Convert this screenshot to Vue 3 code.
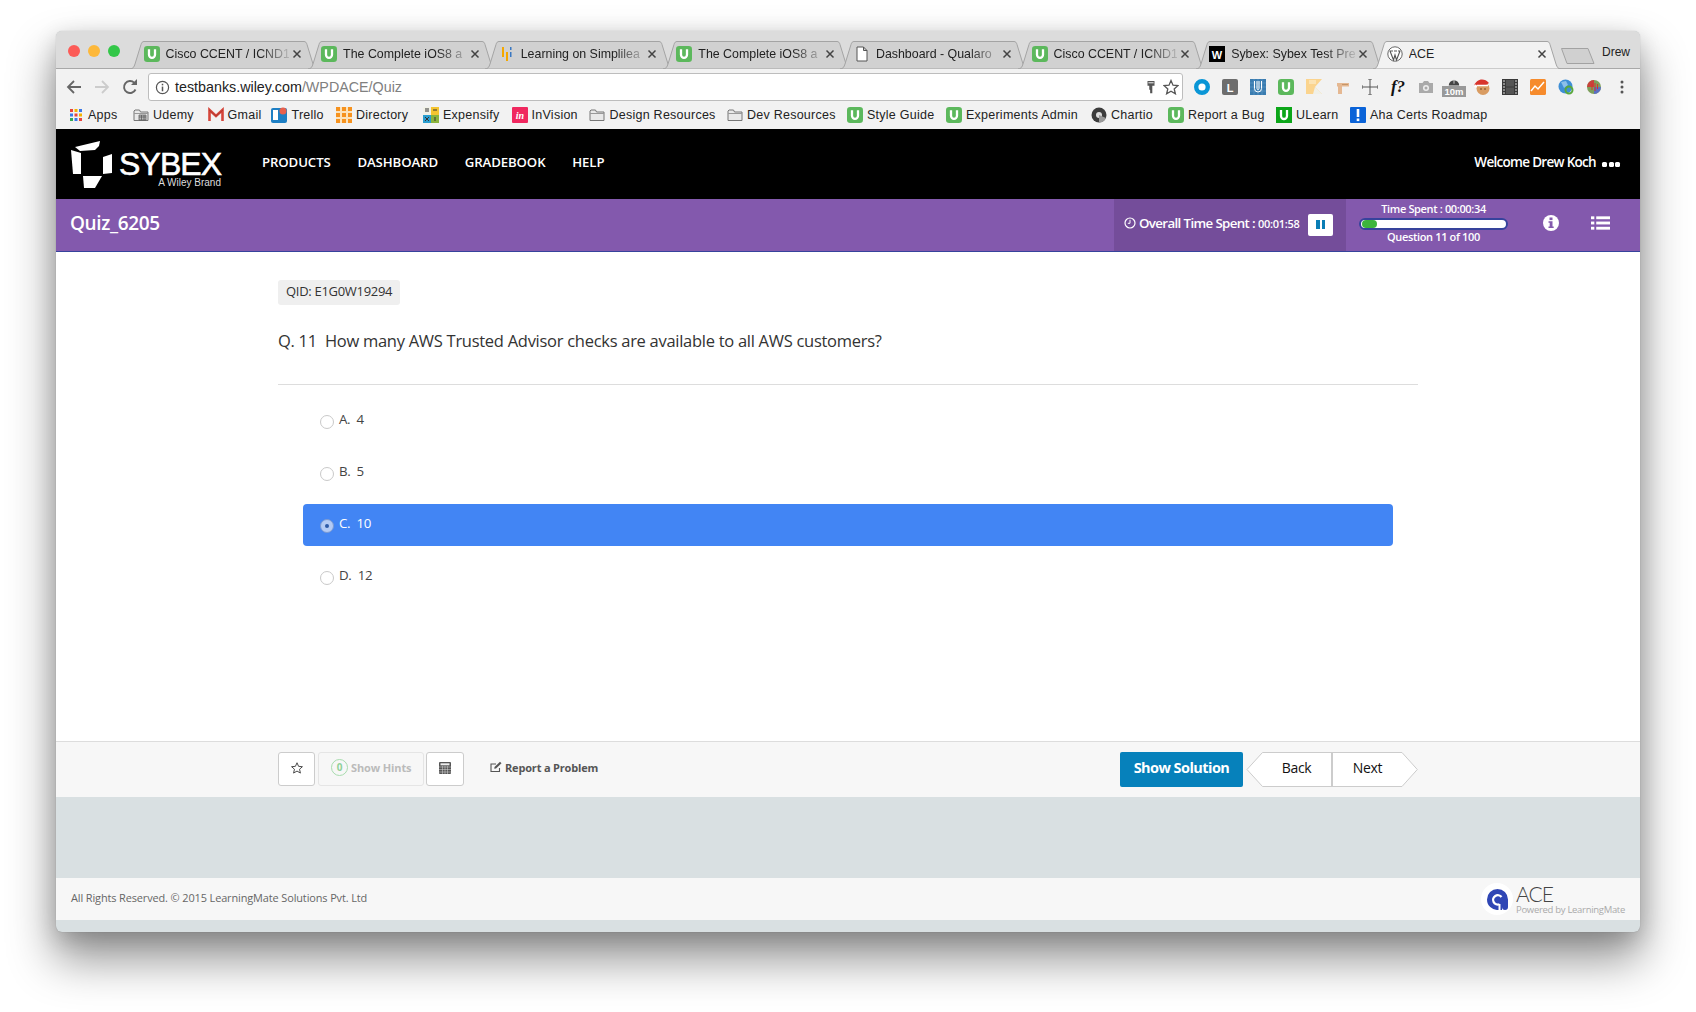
<script setup>
const tabs = [
  { icon: 'u', title: 'Cisco CCENT / ICND1' },
  { icon: 'u', title: 'The Complete iOS8 a' },
  { icon: 'bars', title: 'Learning on Simplilea' },
  { icon: 'u', title: 'The Complete iOS8 a' },
  { icon: 'doc', title: 'Dashboard - Qualaro' },
  { icon: 'u', title: 'Cisco CCENT / ICND1' },
  { icon: 'w', title: 'Sybex: Sybex Test Pre' },
  { icon: 'wp', title: 'ACE', active: true }
]
const bookmarks = [
  { icon: 'apps', label: 'Apps', w: 65 },
  { icon: 'fold2', label: 'Udemy', w: 74.6 },
  { icon: 'gmail', label: 'Gmail', w: 63.9 },
  { icon: 'trello', label: 'Trello', w: 64.5 },
  { icon: 'dir', label: 'Directory', w: 87 },
  { icon: 'exp', label: 'Expensify', w: 88.6 },
  { icon: 'inv', label: 'InVision', w: 77.9 },
  { icon: 'folder', label: 'Design Resources', w: 137.5 },
  { icon: 'folder', label: 'Dev Resources', w: 120 },
  { icon: 'u', label: 'Style Guide', w: 99 },
  { icon: 'u', label: 'Experiments Admin', w: 145 },
  { icon: 'chartio', label: 'Chartio', w: 77 },
  { icon: 'u', label: 'Report a Bug', w: 108 },
  { icon: 'ulearn', label: 'ULearn', w: 74 },
  { icon: 'aha', label: 'Aha Certs Roadmap', w: 140 }
]
const options = [
  { key: 'A.', text: '4' },
  { key: 'B.', text: '5' },
  { key: 'C.', text: '10', selected: true },
  { key: 'D.', text: '12' }
]
const nav = ['PRODUCTS', 'DASHBOARD', 'GRADEBOOK', 'HELP']
</script>

<template>
  <div class="page">
    <svg class="defs" width="0" height="0" aria-hidden="true">
      <symbol id="u" viewBox="0 0 16 16">
        <rect width="16" height="16" rx="3.2" fill="#5cb85c" />
        <path d="M5 3.2v5.6a3 3 0 0 0 6 0V3.2" fill="none" stroke="#fff" stroke-width="2.3" />
      </symbol>
      <symbol id="folder" viewBox="0 0 16 16">
        <path d="M1 4V13.5H15V5H7.5L6.5 3H2Z" fill="#e9e9e9" stroke="#777" />
        <path d="M1 6.5H15" stroke="#999" />
      </symbol>
    </svg>

    <div class="window">
      <!-- tab strip -->
      <div class="strip">
        <div class="lights">
          <span class="light red"></span>
          <span class="light yellow"></span>
          <span class="light green"></span>
        </div>
        <div class="tabs">
          <div v-for="(t, i) in tabs" :key="i" class="tab" :class="{ active: t.active }">
            <svg class="tab-shape" viewBox="0 0 188 28" preserveAspectRatio="none">
              <path d="M0 28C3 28 4 26 5 23L11 3.500C11.500 1.500 12.500 .5 14 .5H174C175.500 .5 176.500 1.500 177 3.500L183 23C184 26 185 28 188 28Z" />
            </svg>
            <svg v-if="t.icon === 'u'" class="fav" viewBox="0 0 16 16"><use href="#u" /></svg>
            <svg v-else-if="t.icon === 'bars'" class="fav" viewBox="0 0 16 16">
              <rect x="3" y="1" width="2" height="10" fill="#f5a800" />
              <rect x="7" y="6" width="2" height="9" fill="#f5a800" />
              <rect x="11" y="1" width="1.500" height="3" fill="#3a78c2" />
              <rect x="11" y="6" width="1.500" height="5" fill="#3a78c2" />
            </svg>
            <svg v-else-if="t.icon === 'doc'" class="fav" viewBox="0 0 16 16">
              <path d="M3 1H9.500L13 4.500V15H3ZM9.500 1V4.500H13" fill="#fff" stroke="#555" />
            </svg>
            <svg v-else-if="t.icon === 'w'" class="fav" viewBox="0 0 16 16">
              <rect width="16" height="16" fill="#000" />
              <text x="8" y="12.500" text-anchor="middle" class="wtext">W</text>
            </svg>
            <svg v-else class="fav" viewBox="0 0 16 16">
              <circle cx="8" cy="8" r="7.200" fill="#fff" stroke="#666" />
              <path d="M3 5L6.500 14L8 9L9.500 14L13 5M2.500 5H6M7 5H10M11 5H13.500" fill="none" stroke="#555" stroke-width="1.100" />
            </svg>
            <span class="tab-title">{{ t.title }}</span>
            <svg class="tab-close" viewBox="0 0 10 10">
              <path d="M1.500 1.500L8.500 8.500M8.500 1.500L1.500 8.500" stroke="#444" stroke-width="1.500" />
            </svg>
          </div>
        </div>
        <svg class="newtab" viewBox="0 0 34 16"><path d="M.5 .5H27L33 15.500H6Z" fill="#d0d0d0" stroke="#a2a2a2" /></svg>
        <span class="drew">Drew</span>
      </div>

      <!-- toolbar -->
      <div class="toolbar">
        <button class="tbtn">
          <svg viewBox="0 0 16 16"><path d="M15 8H2M8 2L2 8L8 14" fill="none" stroke="#666" stroke-width="1.800" /></svg>
        </button>
        <button class="tbtn">
          <svg viewBox="0 0 16 16"><path d="M1 8H14M8 2L14 8L8 14" fill="none" stroke="#ccc" stroke-width="1.800" /></svg>
        </button>
        <button class="tbtn">
          <svg viewBox="0 0 16 16"><path d="M13.500 10.500A6 6 0 1 1 12.300 3.800" fill="none" stroke="#666" stroke-width="1.900" /><path d="M9 6H15V0Z" fill="#666" /></svg>
        </button>
        <div class="url">
          <svg class="url-info" viewBox="0 0 16 16">
            <circle cx="8" cy="8" r="6.500" fill="none" stroke="#555" stroke-width="1.300" />
            <rect x="7.200" y="7" width="1.600" height="5" fill="#555" />
            <rect x="7.200" y="4" width="1.600" height="1.700" fill="#555" />
          </svg>
          <span class="url-host">testbanks.wiley.com</span><span class="url-path">/WPDACE/Quiz</span>
          <svg class="url-key" viewBox="0 0 16 16">
            <path d="M4 1H12V6.500H9.500V15H7V11H6V6.500H4Z" fill="#555" />
            <rect x="5" y="2.500" width="6" height="1.300" fill="#ddd" />
          </svg>
          <svg class="url-star" viewBox="0 0 16 16">
            <path d="M8 1.500L10 6.200L15 6.600L11.200 9.900L12.400 14.800L8 12.200L3.600 14.800L4.800 9.900L1 6.600L6 6.200Z" fill="none" stroke="#555" stroke-width="1.300" />
          </svg>
        </div>
        <div class="ext">
          <div class="ext-slot"><svg viewBox="0 0 16 16"><circle cx="8" cy="8" r="5.800" fill="#fff" stroke="#0a96d6" stroke-width="4.400" /></svg></div>
          <div class="ext-slot"><svg viewBox="0 0 16 16"><rect width="16" height="16" rx="2" fill="#6d6d6d" /><text x="8" y="12.500" text-anchor="middle" class="ltext">L</text></svg></div>
          <div class="ext-slot">
            <svg viewBox="0 0 16 16">
              <rect width="16" height="16" fill="#3a7cb0" />
              <path d="M0 4H16M0 8H16M0 12H16M4 0V16M8 0V16M12 0V16" stroke="#6fa3cc" stroke-width=".5" />
              <path d="M4.500 2V9.500a3.500 3.500 0 0 0 7 0V2M7 2V9.500a1 1 0 0 0 2 0V2" fill="none" stroke="#fff" />
            </svg>
          </div>
          <div class="ext-slot"><svg viewBox="0 0 16 16"><use href="#u" /></svg></div>
          <div class="ext-slot">
            <svg viewBox="0 0 16 16">
              <path d="M0 0H16L9 8L16 15H0Z" fill="#fbd48e" />
              <path d="M3 1H10V5H3Z" fill="#fce3b3" />
              <path d="M9 8L16 15H7Z" fill="#f0f0e8" />
            </svg>
          </div>
          <div class="ext-slot">
            <svg viewBox="0 0 16 16">
              <path d="M3 4H15V7.500H8V15H4V7.500H3Z" fill="#e5b892" />
              <path d="M8 5.500H14" stroke="#c69669" />
            </svg>
          </div>
          <div class="ext-slot">
            <svg viewBox="0 0 16 16">
              <path d="M0 8H16M8 0V16M0 6V10M16 6V10M6 0H10M6 16H10" stroke="#555" fill="none" />
            </svg>
          </div>
          <div class="ext-slot"><span class="ffn">f?</span></div>
          <div class="ext-slot">
            <svg viewBox="0 0 16 16">
              <path d="M1 4H4.500L6 2H10L11.500 4H15V14H1Z" fill="#aaa" />
              <circle cx="8" cy="9" r="3" fill="#eee" /><circle cx="8" cy="9" r="1.500" fill="#aaa" />
            </svg>
          </div>
          <div class="ext-slot">
            <div class="tenm">
              <svg viewBox="0 0 16 9"><path d="M2 9A6 6 0 0 1 14 9Z" fill="#444" /><path d="M8 2V7" stroke="#ddd" /></svg>
              <span>10m</span>
            </div>
          </div>
          <div class="ext-slot">
            <svg viewBox="0 0 16 16">
              <circle cx="9" cy="9.500" r="6.500" fill="#d99c62" />
              <path d="M0 7C2 0 10 -2 15 4L12 6Z" fill="#d8342c" />
              <circle cx="1.500" cy="7" r="1.500" fill="#fff" />
              <path d="M3 6.500H14" stroke="#fff" stroke-width="1.700" />
              <circle cx="7" cy="10" r=".8" fill="#6b3b1a" /><circle cx="11" cy="10" r=".8" fill="#6b3b1a" />
            </svg>
          </div>
          <div class="ext-slot">
            <svg viewBox="0 0 16 16">
              <rect width="16" height="16" fill="#3a3a3a" />
              <path d="M1 2H3M1 5H3M1 8H3M1 11H3M1 14H3M13 2H15M13 5H15M13 8H15M13 11H15M13 14H15" stroke="#ddd" />
              <rect x="4" y="1" width="8" height="6.500" fill="#555" /><rect x="4" y="8.500" width="8" height="6.500" fill="#555" />
            </svg>
          </div>
          <div class="ext-slot">
            <svg viewBox="0 0 16 16">
              <rect width="16" height="16" rx="1.500" fill="#f68b2c" />
              <path d="M1 12L5 7L8 10L14 3" fill="none" stroke="#fff" stroke-width="1.500" />
            </svg>
          </div>
          <div class="ext-slot">
            <svg viewBox="0 0 16 16">
              <circle cx="7.500" cy="7.500" r="7" fill="#3f8fd6" />
              <path d="M3 3L8 2L10 6L6 9Z" fill="#8cc0ea" />
              <circle cx="11" cy="11" r="3.500" fill="none" stroke="#5aa83c" stroke-width="2" />
            </svg>
          </div>
          <div class="ext-slot">
            <svg viewBox="0 0 16 16">
              <circle cx="8" cy="8" r="7" fill="#7d9f5c" />
              <path d="M8 1A7 7 0 0 0 1 8H8Z" fill="#c9413b" />
              <path d="M8 8H15A7 7 0 0 1 8 15Z" fill="#5a6fc4" />
              <path d="M6 5V11M9 4V12M11.500 5V10" stroke="#d8342c" />
            </svg>
          </div>
          <div class="ext-slot">
            <svg viewBox="0 0 16 16"><circle cx="8" cy="3" r="1.500" fill="#555" /><circle cx="8" cy="8" r="1.500" fill="#555" /><circle cx="8" cy="13" r="1.500" fill="#555" /></svg>
          </div>
        </div>
      </div>

      <!-- bookmarks -->
      <div class="bookmarks">
        <div v-for="b in bookmarks" :key="b.label" class="bm" :style="{ width: b.w + 'px' }">
          <svg v-if="b.icon === 'u'" class="bm-ico" viewBox="0 0 16 16"><use href="#u" /></svg>
          <svg v-else-if="b.icon === 'folder'" class="bm-ico" viewBox="0 0 16 16"><use href="#folder" /></svg>
          <svg v-else-if="b.icon === 'fold2'" class="bm-ico" viewBox="0 0 16 16">
            <use href="#folder" />
            <path d="M6 8H13V13H6ZM6 10H13M8.500 8V13M11 8V13" fill="#bbb" stroke="#555" stroke-width=".7" />
          </svg>
          <svg v-else-if="b.icon === 'apps'" class="bm-ico" viewBox="0 0 16 16">
            <rect x="2" y="2" width="3" height="3" fill="#e8453c" /><rect x="6.500" y="2" width="3" height="3" fill="#f4b400" /><rect x="11" y="2" width="3" height="3" fill="#3b78e7" />
            <rect x="2" y="6.500" width="3" height="3" fill="#3b78e7" /><rect x="6.500" y="6.500" width="3" height="3" fill="#e8453c" /><rect x="11" y="6.500" width="3" height="3" fill="#f4b400" />
            <rect x="2" y="11" width="3" height="3" fill="#34a853" /><rect x="6.500" y="11" width="3" height="3" fill="#3b78e7" /><rect x="11" y="11" width="3" height="3" fill="#e8453c" />
          </svg>
          <svg v-else-if="b.icon === 'gmail'" class="bm-ico" viewBox="0 0 16 16">
            <path d="M1.500 14V3L8 9L14.500 3V14" fill="none" stroke="#d5453a" stroke-width="2.600" />
            <path d="M1 3L8 9L15 3" fill="none" stroke="#b23a30" />
          </svg>
          <svg v-else-if="b.icon === 'trello'" class="bm-ico" viewBox="0 0 16 16">
            <rect y="1" width="16" height="15" rx="2" fill="#1d7fc4" />
            <rect x="2" y="3" width="5" height="10" fill="#fff" />
            <circle cx="12" cy="4" r="3.500" fill="#e8604c" />
          </svg>
          <svg v-else-if="b.icon === 'dir'" class="bm-ico" viewBox="0 0 16 16">
            <rect width="16" height="16" fill="#fbe3bd" />
            <path d="M0 0H4V4H0ZM6 0H10V4H6ZM12 0H16V4H12ZM0 6H4V10H0ZM6 6H10V10H6ZM12 6H16V10H12ZM0 12H4V16H0ZM6 12H10V16H6ZM12 12H16V16H12Z" fill="#f6921e" />
          </svg>
          <svg v-else-if="b.icon === 'exp'" class="bm-ico" viewBox="0 0 16 16">
            <rect width="8" height="8" fill="#f2f2e8" /><rect x="8" width="8" height="8" fill="#f4c430" />
            <rect y="8" width="8" height="8" fill="#2a9dcf" /><rect x="8" y="8" width="8" height="8" fill="#8cb43c" />
            <path d="M2 2H6M2 4H6M10 3H14M2 10L6 14M6 10L2 14M12 10V14" stroke="#333" />
          </svg>
          <svg v-else-if="b.icon === 'inv'" class="bm-ico" viewBox="0 0 16 16">
            <rect width="16" height="16" rx="1" fill="#f0285f" />
            <text x="8" y="12" text-anchor="middle" class="invtext">in</text>
          </svg>
          <svg v-else-if="b.icon === 'chartio'" class="bm-ico" viewBox="0 0 16 16">
            <circle cx="8" cy="8" r="7.500" fill="#3c3c3c" />
            <circle cx="8" cy="8" r="3" fill="#ddd" />
            <path d="M8 8L15 11A7.500 7.500 0 0 1 8 15.500Z" fill="#999" />
          </svg>
          <svg v-else-if="b.icon === 'ulearn'" class="bm-ico" viewBox="0 0 16 16">
            <rect width="16" height="16" fill="#0ca619" />
            <path d="M5 3V9a3 3 0 0 0 6 0V3" fill="none" stroke="#fff" stroke-width="2.300" />
          </svg>
          <svg v-else class="bm-ico" viewBox="0 0 16 16">
            <rect width="16" height="16" rx="1" fill="#0a63d8" />
            <rect x="6.700" y="2" width="2.600" height="8" fill="#fff" />
            <rect x="6.700" y="11.500" width="2.600" height="2.600" fill="#fff" />
          </svg>
          <span class="bm-label">{{ b.label }}</span>
        </div>
      </div>

      <!-- site header -->
      <header class="site">
        <div class="logo">
          <svg class="logo-mark" viewBox="0 0 42 47">
            <path d="M4 6L29 0L28 5L24 9L9 10Z" fill="#fff" />
            <path d="M0 9L10 12V33L2 33Z" fill="#fff" />
            <path d="M12 35H31L24 47H13Z" fill="#fff" />
            <path d="M32 16L41 13V32L32 33Z" fill="#fff" />
          </svg>
          <div class="logo-words">
            <span class="logo-name">SYBEX</span>
            <span class="logo-sub">A Wiley Brand</span>
          </div>
        </div>
        <nav class="site-nav">
          <a v-for="n in nav" :key="n">{{ n }}</a>
        </nav>
        <div class="welcome">
          Welcome Drew Koch
          <span class="dots"><i></i><i></i><i></i></span>
        </div>
      </header>

      <!-- purple bar -->
      <div class="quizbar">
        <h1 class="quiz-title">Quiz_6205</h1>
        <div class="overall">
          <svg class="clock" viewBox="0 0 12 12">
            <circle cx="6" cy="6" r="5" fill="none" stroke="#fff" stroke-width="1.200" />
            <path d="M6 2.800V6.300H3.800" fill="none" stroke="#fff" />
          </svg>
          <span class="ov-label">Overall Time Spent :</span>
          <span class="ov-time">00:01:58</span>
          <button class="pause"><i></i><i></i></button>
        </div>
        <div class="spent">
          <span>Time Spent : 00:00:34</span>
          <div class="progress"><div class="progress-fill"></div></div>
          <span>Question 11 of 100</span>
        </div>
        <svg class="info" viewBox="0 0 16 16">
          <circle cx="8" cy="8" r="8" fill="#fff" />
          <rect x="6.500" y="2.500" width="3" height="2.600" fill="#8359ad" />
          <path d="M5.500 6.300H9.500V11.500H10.700V13H5.500V11.500H6.700V7.800H5.500Z" fill="#8359ad" />
        </svg>
        <svg class="listico" viewBox="0 0 20 14">
          <rect width="3.500" height="3" fill="#fff" /><rect x="5.500" width="14.500" height="3" fill="#fff" />
          <rect y="5.500" width="3.500" height="3" fill="#fff" /><rect x="5.500" y="5.500" width="14.500" height="3" fill="#fff" />
          <rect y="11" width="3.500" height="3" fill="#fff" /><rect x="5.500" y="11" width="14.500" height="3" fill="#fff" />
        </svg>
      </div>

      <!-- question -->
      <main class="main">
        <span class="qid">QID: E1G0W19294</span>
        <p class="question">Q. 11&nbsp; How many AWS Trusted Advisor checks are available to all AWS customers?</p>
        <div class="rule"></div>
        <div class="options">
          <label v-for="o in options" :key="o.key" class="option" :class="{ selected: o.selected }">
            <span class="radio"><i v-if="o.selected"></i></span>
            <span class="opt-text">{{ o.key }}&nbsp; {{ o.text }}</span>
          </label>
        </div>
      </main>

      <!-- actions -->
      <div class="actions">
        <button class="box star-box">
          <svg viewBox="0 0 16 16"><path d="M8 2L9.800 6.100L14.200 6.500L10.900 9.400L11.900 13.800L8 11.500L4.100 13.800L5.100 9.400L1.800 6.500L6.200 6.100Z" fill="none" stroke="#444" stroke-width="1.100" /></svg>
        </button>
        <button class="box hints">
          <span class="hint-count">0</span>
          <span>Show Hints</span>
        </button>
        <button class="box calc">
          <svg viewBox="0 0 12 12">
            <rect width="12" height="12" rx="1" fill="#555" />
            <rect x="1.500" y="1.300" width="9" height="2" fill="#eee" />
            <path d="M0 5H12M0 7.500H12M0 10H12M3.500 4V12M6 4V12M8.500 4V12" stroke="#ddd" stroke-width=".5" />
          </svg>
        </button>
        <a class="report">
          <svg viewBox="0 0 12 12">
            <path d="M9.500 7V10.500H1V3H6" fill="none" stroke="#555" stroke-width="1.100" />
            <path d="M4.500 6L10 .8L11.500 2.300L6 7.500L4.300 7.800Z" fill="#555" />
          </svg>
          Report a Problem
        </a>
        <div class="act-right">
          <button class="solution">Show Solution</button>
          <div class="pager">
            <svg class="pager-bg" viewBox="0 0 172 35">
              <path d="M16.500 .5H156L171.300 17.500L156 34.500H16.500L1 17.500Z" fill="#fff" stroke="#ccc" />
              <rect x="85" y="0" width="2" height="35" fill="#ccc" />
            </svg>
            <a class="page-back">Back</a>
            <a class="page-next">Next</a>
          </div>
        </div>
      </div>

      <div class="band"></div>

      <footer class="foot">
        <span class="foot-copy">All Rights Reserved. © 2015 LearningMate Solutions Pvt. Ltd</span>
        <div class="foot-brand">
          <div class="foot-circle">
            <svg viewBox="0 0 21 21">
              <path d="M0 10.500A10.500 10.500 0 0 1 21 10.500V18A3 3 0 0 1 15 18V21H11A10.500 10.500 0 0 1 0 10.500Z" fill="#2f46b5" />
              <path d="M14.500 8A4.700 4.700 0 1 0 12.500 15.300" fill="none" stroke="#fff" stroke-width="2.300" />
              <path d="M12.500 15V21" stroke="#fff" stroke-width="2" />
            </svg>
          </div>
          <div class="foot-words">
            <span class="foot-ace">ACE</span>
            <span class="foot-pow">Powered by LearningMate</span>
          </div>
        </div>
      </footer>
    </div>
  </div>
</template>

<style>
html, body { margin: 0; background: #fff; }
</style>

<style scoped>
.page { width: 1696px; height: 1012px; padding: 31px 0 0 56px; box-sizing: border-box; overflow: hidden; font-family: "Open Sans", "Liberation Sans", sans-serif; }
.defs { position: absolute; }
.window { width: 1584px; height: 901px; display: flex; flex-direction: column; border-radius: 6px; overflow: hidden; background: #d9e0e2; box-shadow: 0 26px 46px 2px rgba(0,0,0,.42), 0 0 1px rgba(0,0,0,.3), 0 6px 22px rgba(0,0,0,.16); }

.strip { height: 37px; flex: none; display: flex; align-items: flex-end; background: #dcdcdc; border-bottom: 1px solid #a8a8a8; position: relative; font-family: "Liberation Sans", sans-serif; }
.lights { align-self: flex-start; margin: 14px 0 0 12px; width: 52px; display: flex; gap: 8px; flex: none; }
.light { width: 12px; height: 12px; border-radius: 50%; }
.red { background: #fc5b57; } .yellow { background: #fdb83a; } .green { background: #33c748; }
.tabs { display: flex; margin-left: 10px; margin-bottom: -1px; flex: none; }
.tab { position: relative; width: 188px; height: 28px; margin-right: -10.400px; padding: 0 0 2px 13.500px; box-sizing: border-box; display: flex; align-items: center; flex: none; }
.tab:last-child { margin-right: 0; }
.tab-shape { position: absolute; left: 0; top: 0; width: 188px; height: 28px; }
.tab-shape path { fill: #d1d1d1; stroke: #a4a4a4; }
.tab.active .tab-shape path { fill: #f2f2f2; }
.fav { width: 16px; height: 16px; flex: none; position: relative; }
.wtext { font: bold 11px "Liberation Sans", sans-serif; fill: #fff; }
.tab-title { position: relative; width: 123.500px; margin-left: 6px; font-size: 12.400px; color: #222; white-space: nowrap; overflow: hidden; -webkit-mask-image: linear-gradient(90deg, #000 76%, rgba(0,0,0,.15) 100%); mask-image: linear-gradient(90deg, #000 76%, rgba(0,0,0,.15) 100%); }
.tab.active .tab-title { -webkit-mask-image: none; mask-image: none; width: 125.500px; }
.tab-close { position: relative; width: 10px; height: 10px; margin-left: 3px; flex: none; }
.newtab { align-self: flex-start; width: 34px; height: 16px; margin: 17px 0 0 0; flex: none; }
.drew { align-self: flex-start; margin: 12.500px 10px 0 auto; font-size: 12px; line-height: 16px; color: #222; }

.toolbar { height: 32px; padding-top: 4px; box-sizing: border-box; flex: none; display: flex; align-items: center; padding-left: 4px; background: #f2f2f2; font-family: "Liberation Sans", sans-serif; }
.tbtn { width: 28px; height: 28px; border: 0; padding: 0; background: none; display: flex; align-items: center; justify-content: center; flex: none; }
.tbtn svg { width: 16px; height: 16px; }
.url { margin-left: 4px; width: 1035px; height: 28px; box-sizing: border-box; flex: none; display: flex; align-items: center; background: #fff; border: 1px solid #bdbdbd; border-radius: 3px; padding-left: 6px; }
.url-info { width: 15px; height: 15px; flex: none; }
.url-host { margin-left: 5px; font-size: 14.300px; color: #222; }
.url-path { font-size: 14.300px; color: #808080; }
.url-key { width: 14px; height: 14px; margin-left: auto; flex: none; }
.url-star { width: 16px; height: 16px; margin: 0 3px 0 5px; flex: none; }
.ext { display: flex; margin-left: 5px; }
.ext-slot { width: 28px; height: 28px; flex: none; display: flex; align-items: center; justify-content: center; }
.ext-slot > svg { width: 16px; height: 16px; }
.ltext { font: bold 11px "Liberation Sans", sans-serif; fill: #fff; }
.ffn { font: italic bold 17px "Liberation Serif", serif; color: #111; }
.tenm { display: flex; flex-direction: column; align-items: center; width: 24px; }
.tenm svg { width: 14px; height: 9px; }
.tenm span { background: #999; color: #fff; font: bold 9.500px/11px "Liberation Sans", sans-serif; width: 24px; text-align: center; }

.bookmarks { height: 28px; flex: none; display: flex; align-items: center; padding-left: 12px; background: #f2f2f2; font-family: "Liberation Sans", sans-serif; }
.bm { display: flex; align-items: center; flex: none; white-space: nowrap; }
.bm-ico { width: 16px; height: 16px; flex: none; }
.bm-label { margin-left: 4px; font-size: 12.500px; letter-spacing: .25px; color: #222; }
.invtext { font: italic bold 10px "Liberation Serif", serif; fill: #fff; }

.site { height: 70px; flex: none; display: flex; align-items: center; background: #000; padding: 0 20px 0 15px; color: #fff; }
.logo { display: flex; width: 151px; height: 47px; flex: none; }
.logo-mark { width: 42px; height: 47px; flex: none; }
.logo-words { margin-left: 6px; padding-top: 11px; width: 104px; display: flex; flex-direction: column; align-items: flex-end; font-family: "Liberation Sans", sans-serif; }
.logo-name { font-size: 32px; line-height: 24px; letter-spacing: -.9px; -webkit-text-stroke: .6px #fff; width: 104px; }
.logo-sub { font-size: 10px; line-height: 13px; color: #ddd; margin-right: 2px; }
.site-nav { display: flex; gap: 26.800px; margin-left: 40px; padding-bottom: 4px; font-size: 13.200px; font-weight: 600; letter-spacing: -.1px; }
.welcome { margin-left: auto; padding-bottom: 4px; display: flex; align-items: center; gap: 6px; font-size: 13.500px; font-weight: 600; letter-spacing: -.7px; }
.dots { display: flex; gap: 1.500px; margin-top: 4px; }
.dots i { width: 5px; height: 5px; background: #fff; border-radius: 1.500px; }

.quizbar { height: 53px; flex: none; box-sizing: border-box; display: flex; align-items: center; background: #8359ad; border-bottom: 1px solid #36439c; color: #fff; padding-left: 14px; }
.quiz-title { margin: 0 0 5px; font-size: 19px; font-weight: 600; letter-spacing: -.35px; }
.overall { margin-left: auto; width: 232px; height: 52px; box-sizing: border-box; padding-left: 10px; background: #744d9a; display: flex; align-items: center; flex: none; }
.clock { width: 12px; height: 12px; flex: none; margin: 0 3px 4px 0; }
.ov-label { font-size: 13.300px; font-weight: 600; letter-spacing: -.63px; white-space: nowrap; margin-bottom: 4px; }
.ov-time { font-size: 11px; font-weight: 600; letter-spacing: -.3px; margin: 0 0 4px 3px; white-space: nowrap; }
.pause { margin: 0 0 1px 9px; width: 25px; height: 22px; border: 0; border-radius: 2px; background: #fff; display: flex; align-items: center; justify-content: center; gap: 2px; padding: 0; flex: none; }
.pause i { width: 3.500px; height: 9px; background: #0a7db5; }
.spent { width: 175px; flex: none; padding-bottom: 5px; display: flex; flex-direction: column; align-items: center; font-size: 11px; font-weight: 600; letter-spacing: -.35px; line-height: 14px; }
.progress { width: 149px; height: 12px; box-sizing: border-box; border: 2px solid #36439c; border-radius: 6px; background: #fff; margin: 2px 0 0; overflow: hidden; }
.progress-fill { width: 15px; height: 100%; background: #3cb53c; margin-left: 1px; border-radius: 4px; }
.info { width: 16px; height: 16px; margin: 0 0 4px 22px; flex: none; }
.listico { width: 19px; height: 14px; margin: 0 30px 4px 32px; flex: none; }

.main { flex: 1; min-height: 0; background: #fff; padding: 28px 222px 0 222px; display: flex; flex-direction: column; }
.qid { align-self: flex-start; height: 25px; box-sizing: border-box; padding: 0 8px; line-height: 22px; background: #efefef; border-radius: 3px; font-size: 13px; letter-spacing: -.3px; color: #333; white-space: nowrap; }
.question { margin: 21px 0 28px; font-size: 16.500px; line-height: 30px; color: #333; letter-spacing: -.28px; white-space: nowrap; }
.rule { height: 1px; background: #ddd; flex: none; }
.options { margin-top: 15px; padding: 0 25px; display: flex; flex-direction: column; gap: 10px; }
.option { height: 42px; box-sizing: border-box; display: flex; padding: 9px 0 0 16.500px; border-radius: 4px; color: #444; }
.option.selected { background: #4285f4; color: #fff; }
.radio { width: 14px; height: 14px; box-sizing: border-box; margin-top: 6px; border-radius: 50%; border: 1px solid #c9c9c9; background: #fff; flex: none; display: flex; align-items: center; justify-content: center; }
.selected .radio { background: #b4cbf5; border-color: #7b9ad3; }
.radio i { width: 4px; height: 4px; border-radius: 50%; background: #2d5ba8; }
.opt-text { margin-left: 5.500px; font-size: 13.300px; letter-spacing: -.35px; line-height: 20px; white-space: pre; }

.actions { height: 56px; flex: none; box-sizing: border-box; border-top: 1px solid #ddd; background: #f7f7f7; display: flex; padding: 10px 0 0 222px; }
.box { height: 34px; box-sizing: border-box; border: 1px solid #ccc; border-radius: 3px; background: #fff; padding: 0; display: flex; align-items: center; justify-content: center; flex: none; font-family: inherit; }
.star-box { width: 37px; padding: 0 0 2px 1px; }
.star-box svg { width: 14px; height: 14px; }
.hints { width: 106px; margin-left: 3px; border-color: #e5e5e5; background: #f7f7f7; gap: 3px; justify-content: flex-start; padding: 0 0 3px 12px; color: #bbb; font-size: 11px; font-weight: 700; letter-spacing: -.12px; }
.hint-count { width: 17px; height: 17px; box-sizing: border-box; border: 1px solid #a8dcae; border-radius: 50%; color: #8fd197; font-size: 10px; line-height: 15px; text-align: center; font-weight: 700; }
.calc { width: 38px; margin-left: 2px; padding-bottom: 2px; }
.calc svg { width: 12px; height: 12px; }
.report { margin-left: 26px; height: 34px; box-sizing: border-box; padding-bottom: 4px; display: flex; align-items: center; gap: 3px; color: #555; font-size: 11px; font-weight: 700; letter-spacing: -.18px; white-space: nowrap; }
.report svg { width: 12px; height: 12px; }
.act-right { margin-left: auto; margin-right: 222px; display: flex; }
.solution { width: 123px; height: 35px; border: 0; border-radius: 2px; background: #0681bb; color: #fff; font: 700 14.500px "Open Sans", sans-serif; letter-spacing: -.55px; padding: 0 0 4px; }
.pager { margin-left: 3px; width: 172px; height: 35px; position: relative; display: flex; color: #111; font-size: 14px; letter-spacing: -.3px; line-height: 32px; }
.pager-bg { position: absolute; left: 0; top: 0; width: 172px; height: 35px; }
.page-back { position: relative; width: 87px; box-sizing: border-box; padding-left: 14px; text-align: center; }
.page-next { position: relative; width: 85px; box-sizing: border-box; padding-right: 16px; text-align: center; }

.band { height: 81px; flex: none; }
.foot { height: 42px; flex: none; background: #f7f7f7; display: flex; align-items: center; padding: 0 15px; position: relative; margin-bottom: 12px; }
.foot-copy { font-size: 10.950px; color: #666; letter-spacing: -.12px; white-space: nowrap; margin-bottom: 4px; }
.foot-brand { margin-left: auto; display: flex; align-items: center; }
.foot-circle { width: 32px; height: 32px; border-radius: 50%; background: #fff; display: flex; align-items: center; justify-content: center; }
.foot-circle svg { width: 21px; height: 21px; }
.foot-words { margin-left: 3px; display: flex; flex-direction: column; }
.foot-ace { font: 300 21px/21px Lato, sans-serif; color: #444; letter-spacing: -1px; }
.foot-pow { font-size: 9.500px; line-height: 11px; color: #aaa; white-space: nowrap; letter-spacing: -.3px; }
</style>
